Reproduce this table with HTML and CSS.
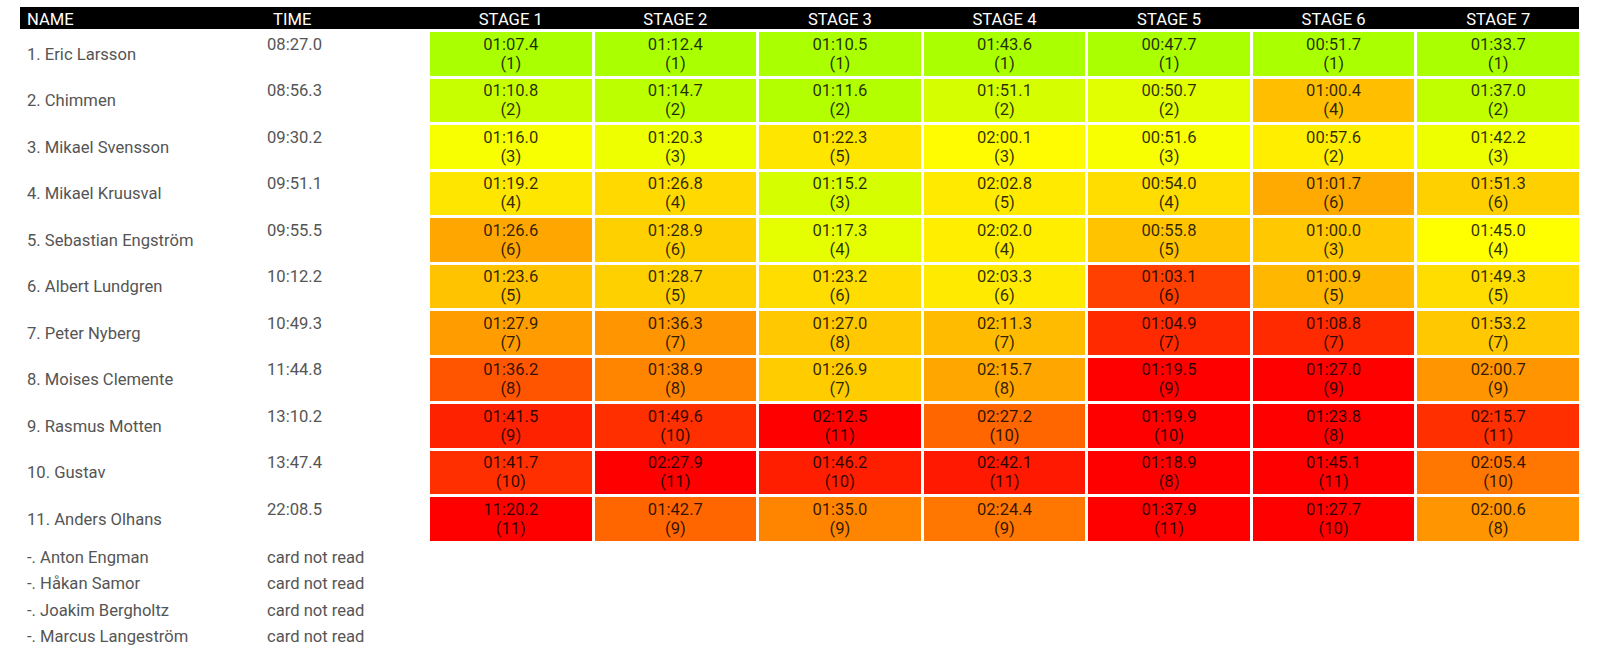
FILE: index.html
```html
<!DOCTYPE html>
<html lang="sv">
<head>
<meta charset="utf-8">
<title>Results</title>
<link rel="stylesheet" href="styles.css">
</head>
<body>
<div class="results">
  <div class="row head">
    <div class="h-name">NAME</div>
    <div class="h-time">TIME</div>
    <div class="h-stage">STAGE 1</div>
    <div class="h-stage">STAGE 2</div>
    <div class="h-stage">STAGE 3</div>
    <div class="h-stage">STAGE 4</div>
    <div class="h-stage">STAGE 5</div>
    <div class="h-stage">STAGE 6</div>
    <div class="h-stage">STAGE 7</div>
  </div>

  <div class="row">
    <div class="name">1. Eric Larsson</div>
    <div class="time">08:27.0</div>
    <div class="split" style="background:hsl(80,100%,50%)">01:07.4<br>(1)</div>
    <div class="split" style="background:hsl(80,100%,50%)">01:12.4<br>(1)</div>
    <div class="split" style="background:hsl(80,100%,50%)">01:10.5<br>(1)</div>
    <div class="split" style="background:hsl(80,100%,50%)">01:43.6<br>(1)</div>
    <div class="split" style="background:hsl(80,100%,50%)">00:47.7<br>(1)</div>
    <div class="split" style="background:hsl(80,100%,50%)">00:51.7<br>(1)</div>
    <div class="split" style="background:hsl(80,100%,50%)">01:33.7<br>(1)</div>
  </div>

  <div class="row">
    <div class="name">2. Chimmen</div>
    <div class="time">08:56.3</div>
    <div class="split" style="background:hsl(73,100%,50%)">01:10.8<br>(2)</div>
    <div class="split" style="background:hsl(76,100%,50%)">01:14.7<br>(2)</div>
    <div class="split" style="background:hsl(78,100%,50%)">01:11.6<br>(2)</div>
    <div class="split" style="background:hsl(70,100%,50%)">01:51.1<br>(2)</div>
    <div class="split" style="background:hsl(67,100%,50%)">00:50.7<br>(2)</div>
    <div class="split" style="background:hsl(45,100%,50%)">01:00.4<br>(4)</div>
    <div class="split" style="background:hsl(75,100%,50%)">01:37.0<br>(2)</div>
  </div>

  <div class="row">
    <div class="name">3. Mikael Svensson</div>
    <div class="time">09:30.2</div>
    <div class="split" style="background:hsl(62,100%,50%)">01:16.0<br>(3)</div>
    <div class="split" style="background:hsl(64,100%,50%)">01:20.3<br>(3)</div>
    <div class="split" style="background:hsl(54,100%,50%)">01:22.3<br>(5)</div>
    <div class="split" style="background:hsl(59,100%,50%)">02:00.1<br>(3)</div>
    <div class="split" style="background:hsl(62,100%,50%)">00:51.6<br>(3)</div>
    <div class="split" style="background:hsl(56,100%,50%)">00:57.6<br>(2)</div>
    <div class="split" style="background:hsl(64,100%,50%)">01:42.2<br>(3)</div>
  </div>

  <div class="row">
    <div class="name">4. Mikael Kruusval</div>
    <div class="time">09:51.1</div>
    <div class="split" style="background:hsl(54,100%,50%)">01:19.2<br>(4)</div>
    <div class="split" style="background:hsl(51,100%,50%)">01:26.8<br>(4)</div>
    <div class="split" style="background:hsl(70,100%,50%)">01:15.2<br>(3)</div>
    <div class="split" style="background:hsl(55,100%,50%)">02:02.8<br>(5)</div>
    <div class="split" style="background:hsl(52,100%,50%)">00:54.0<br>(4)</div>
    <div class="split" style="background:hsl(40,100%,50%)">01:01.7<br>(6)</div>
    <div class="split" style="background:hsl(49,100%,50%)">01:51.3<br>(6)</div>
  </div>

  <div class="row">
    <div class="name">5. Sebastian Engström</div>
    <div class="time">09:55.5</div>
    <div class="split" style="background:hsl(39,100%,50%)">01:26.6<br>(6)</div>
    <div class="split" style="background:hsl(49,100%,50%)">01:28.9<br>(6)</div>
    <div class="split" style="background:hsl(66,100%,50%)">01:17.3<br>(4)</div>
    <div class="split" style="background:hsl(56,100%,50%)">02:02.0<br>(4)</div>
    <div class="split" style="background:hsl(46,100%,50%)">00:55.8<br>(5)</div>
    <div class="split" style="background:hsl(47,100%,50%)">01:00.0<br>(3)</div>
    <div class="split" style="background:hsl(60,100%,50%)">01:45.0<br>(4)</div>
  </div>

  <div class="row">
    <div class="name">6. Albert Lundgren</div>
    <div class="time">10:12.2</div>
    <div class="split" style="background:hsl(46,100%,50%)">01:23.6<br>(5)</div>
    <div class="split" style="background:hsl(49,100%,50%)">01:28.7<br>(5)</div>
    <div class="split" style="background:hsl(52,100%,50%)">01:23.2<br>(6)</div>
    <div class="split" style="background:hsl(55,100%,50%)">02:03.3<br>(6)</div>
    <div class="split" style="background:hsl(15,100%,50%)">01:03.1<br>(6)</div>
    <div class="split" style="background:hsl(43,100%,50%)">01:00.9<br>(5)</div>
    <div class="split" style="background:hsl(52,100%,50%)">01:49.3<br>(5)</div>
  </div>

  <div class="row">
    <div class="name">7. Peter Nyberg</div>
    <div class="time">10:49.3</div>
    <div class="split" style="background:hsl(37,100%,50%)">01:27.9<br>(7)</div>
    <div class="split" style="background:hsl(35,100%,50%)">01:36.3<br>(7)</div>
    <div class="split" style="background:hsl(47,100%,50%)">01:27.0<br>(8)</div>
    <div class="split" style="background:hsl(44,100%,50%)">02:11.3<br>(7)</div>
    <div class="split" style="background:hsl(10,100%,50%)">01:04.9<br>(7)</div>
    <div class="split" style="background:hsl(10,100%,50%)">01:08.8<br>(7)</div>
    <div class="split" style="background:hsl(47,100%,50%)">01:53.2<br>(7)</div>
  </div>

  <div class="row">
    <div class="name">8. Moises Clemente</div>
    <div class="time">11:44.8</div>
    <div class="split" style="background:hsl(20,100%,50%)">01:36.2<br>(8)</div>
    <div class="split" style="background:hsl(31,100%,50%)">01:38.9<br>(8)</div>
    <div class="split" style="background:hsl(48,100%,50%)">01:26.9<br>(7)</div>
    <div class="split" style="background:hsl(39,100%,50%)">02:15.7<br>(8)</div>
    <div class="split" style="background:hsl(0,100%,50%)">01:19.5<br>(9)</div>
    <div class="split" style="background:hsl(0,100%,50%)">01:27.0<br>(9)</div>
    <div class="split" style="background:hsl(35,100%,50%)">02:00.7<br>(9)</div>
  </div>

  <div class="row">
    <div class="name">9. Rasmus Motten</div>
    <div class="time">13:10.2</div>
    <div class="split" style="background:hsl(8,100%,50%)">01:41.5<br>(9)</div>
    <div class="split" style="background:hsl(11,100%,50%)">01:49.6<br>(10)</div>
    <div class="split" style="background:hsl(0,100%,50%)">02:12.5<br>(11)</div>
    <div class="split" style="background:hsl(24,100%,50%)">02:27.2<br>(10)</div>
    <div class="split" style="background:hsl(0,100%,50%)">01:19.9<br>(10)</div>
    <div class="split" style="background:hsl(0,100%,50%)">01:23.8<br>(8)</div>
    <div class="split" style="background:hsl(11,100%,50%)">02:15.7<br>(11)</div>
  </div>

  <div class="row">
    <div class="name">10. Gustav</div>
    <div class="time">13:47.4</div>
    <div class="split" style="background:hsl(11,100%,50%)">01:41.7<br>(10)</div>
    <div class="split" style="background:hsl(0,100%,50%)">02:27.9<br>(11)</div>
    <div class="split" style="background:hsl(7,100%,50%)">01:46.2<br>(10)</div>
    <div class="split" style="background:hsl(6,100%,50%)">02:42.1<br>(11)</div>
    <div class="split" style="background:hsl(0,100%,50%)">01:18.9<br>(8)</div>
    <div class="split" style="background:hsl(0,100%,50%)">01:45.1<br>(11)</div>
    <div class="split" style="background:hsl(28,100%,50%)">02:05.4<br>(10)</div>
  </div>

  <div class="row">
    <div class="name">11. Anders Olhans</div>
    <div class="time">22:08.5</div>
    <div class="split" style="background:hsl(0,100%,50%)">11:20.2<br>(11)</div>
    <div class="split" style="background:hsl(24,100%,50%)">01:42.7<br>(9)</div>
    <div class="split" style="background:hsl(31,100%,50%)">01:35.0<br>(9)</div>
    <div class="split" style="background:hsl(28,100%,50%)">02:24.4<br>(9)</div>
    <div class="split" style="background:hsl(0,100%,50%)">01:37.9<br>(11)</div>
    <div class="split" style="background:hsl(0,100%,50%)">01:27.7<br>(10)</div>
    <div class="split" style="background:hsl(35,100%,50%)">02:00.6<br>(8)</div>
  </div>
</div>

<div class="dnf">
  <div class="dnf-row"><div class="name">-. Anton Engman</div><div class="time">card not read</div></div>
  <div class="dnf-row"><div class="name">-. Håkan Samor</div><div class="time">card not read</div></div>
  <div class="dnf-row"><div class="name">-. Joakim Bergholtz</div><div class="time">card not read</div></div>
  <div class="dnf-row"><div class="name">-. Marcus Langeström</div><div class="time">card not read</div></div>
</div>
</body>
</html>
```

FILE: styles.css
```css
html, body {
  background: #ffffff;
}

body {
  margin: 7px 21px 0 20px;
  font-family: Roboto, "Liberation Sans", Arial, sans-serif;
  font-size: 16.6px;
  line-height: 19px;
  color: #555555;
}

.results {
  display: flex;
  flex-direction: column;
  gap: 3px;
}

.row,
.dnf-row {
  display: grid;
  grid-template-columns: 240px 164px repeat(7, 1fr);
  column-gap: 3px;
}

.head {
  background: #000000;
  color: #ffffff;
  padding: 2.5px 0 0.5px;
}

.h-name {
  padding-left: 7px;
}

.h-time {
  padding-left: 10px;
}

.h-stage {
  text-align: center;
}

.name {
  padding: 1px 0 0 7px;
  align-self: center;
  white-space: nowrap;
}

.time {
  padding: 2.75px 0 0 4px;
  white-space: nowrap;
}

.split {
  padding: 2.75px 0;
  text-align: center;
  color: rgba(0, 0, 0, 0.82);
}

.dnf {
  margin-top: 4px;
}

.dnf-row {
  line-height: 26.5px;
}

.dnf-row .name {
  padding-top: 0;
}

.dnf-row .time {
  padding-top: 0;
}
```
